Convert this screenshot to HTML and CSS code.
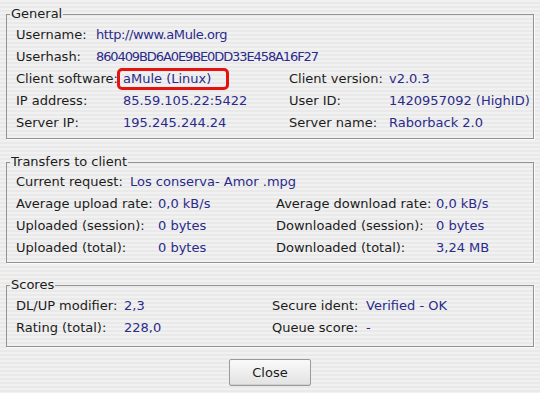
FILE: index.html
```html
<!DOCTYPE html>
<html lang="en">
<head>
  <meta charset="UTF-8" />
  <title>Client details</title>
  <link rel="stylesheet" href="styles.css">
</head>
<body>
  <fieldset class="group group-general">
    <legend>General</legend>
    <div class="rows">
      <div class="row">
        <span class="label w-80">Username:</span>
        <span class="value url">http://www.aMule.org</span>
      </div>
      <div class="row">
        <span class="label w-80">Userhash:</span>
        <span class="value hash">860409BD6A0E9BE0DD33E458A16F27</span>
      </div>
      <div class="row">
        <span class="label w-107">Client software:</span>
        <span class="value w-166"><span class="mark">aMule (Linux)</span></span>
        <span class="label w-100">Client version:</span>
        <span class="value">v2.0.3</span>
      </div>
      <div class="row">
        <span class="label w-107">IP address:</span>
        <span class="value w-166">85.59.105.22:5422</span>
        <span class="label w-100">User ID:</span>
        <span class="value">1420957092 (HighID)</span>
      </div>
      <div class="row">
        <span class="label w-107">Server IP:</span>
        <span class="value w-166">195.245.244.24</span>
        <span class="label w-100">Server name:</span>
        <span class="value">Raborback 2.0</span>
      </div>
    </div>
  </fieldset>

  <fieldset class="group group-transfers">
    <legend>Transfers to client</legend>
    <div class="rows">
      <div class="row">
        <span class="label w-114">Current request:</span>
        <span class="value">Los conserva- Amor .mpg</span>
      </div>
      <div class="row">
        <span class="label w-142">Average upload rate:</span>
        <span class="value w-118">0,0 kB/s</span>
        <span class="label w-160">Average download rate:</span>
        <span class="value">0,0 kB/s</span>
      </div>
      <div class="row">
        <span class="label w-142">Uploaded (session):</span>
        <span class="value w-118">0 bytes</span>
        <span class="label w-160">Downloaded (session):</span>
        <span class="value">0 bytes</span>
      </div>
      <div class="row">
        <span class="label w-142">Uploaded (total):</span>
        <span class="value w-118">0 bytes</span>
        <span class="label w-160">Downloaded (total):</span>
        <span class="value">3,24 MB</span>
      </div>
    </div>
  </fieldset>

  <fieldset class="group group-scores">
    <legend>Scores</legend>
    <div class="rows">
      <div class="row">
        <span class="label w-108">DL/UP modifier:</span>
        <span class="value w-148">2,3</span>
        <span class="label w-94">Secure ident:</span>
        <span class="value">Verified - OK</span>
      </div>
      <div class="row">
        <span class="label w-108">Rating (total):</span>
        <span class="value w-148">228,0</span>
        <span class="label w-94">Queue score:</span>
        <span class="value">-</span>
      </div>
    </div>
  </fieldset>

  <div class="actions">
    <button class="close">Close</button>
  </div>
</body>
</html>
```

FILE: styles.css
```css
html {
  background: repeating-linear-gradient(to bottom, #f1f1f1 0, #f1f1f1 2px, #e9e9e9 2px, #e9e9e9 4px);
}

body {
  margin: 0;
  padding: 6px 6px 0 6px;
  font-family: "DejaVu Sans", sans-serif;
  font-size: 13px;
  color: #1c1c1c;
  height: 393px;
  box-sizing: border-box;
  overflow: hidden;
}

.group {
  margin: 0;
  padding: 0;
  min-width: 0;
  border: 1px solid #939393;
  box-shadow: 1px 1px 0 #fbfbfb;
}

.group legend {
  margin-left: 3px;
  padding: 0 1px;
  line-height: 16px;
}

.rows {
  padding: 2px 9px 4px 9px;
}

.group-transfers {
  margin-top: 15px;
}

.group-transfers .rows {
  padding-top: 1px;
  padding-bottom: 3px;
}

.group-scores {
  margin-top: 14px;
}

.group-scores .rows {
  padding-bottom: 7px;
}

.row {
  display: flex;
  height: 22px;
  line-height: 22px;
  white-space: nowrap;
}

.label, .value {
  flex: none;
}

.value {
  color: #2b2b8a;
}

.url {
  letter-spacing: -0.4px;
}

.hash {
  letter-spacing: -1.1px;
}

.w-80 { width: 80px; }
.w-94 { width: 94px; }
.w-100 { width: 100px; }
.w-107 { width: 107px; }
.w-108 { width: 108px; }
.w-114 { width: 114px; }
.w-118 { width: 118px; }
.w-142 { width: 142px; }
.w-148 { width: 148px; }
.w-160 { width: 160px; }
.w-166 { width: 166px; }

.mark {
  display: inline-block;
  vertical-align: top;
  box-sizing: border-box;
  height: 22px;
  line-height: 16px;
  margin-left: -6px;
  padding: 0 15px 0 3px;
  border: 3px solid #e5130f;
  border-radius: 5px;
}

.actions {
  display: flex;
  justify-content: center;
  margin-top: 12px;
}

.close {
  width: 82px;
  height: 27px;
  font-family: "DejaVu Sans", sans-serif;
  font-size: 13px;
  color: #1c1c1c;
  background: linear-gradient(to bottom, #fafafa, #e2e2e2);
  border: 1px solid #9a9a9a;
  border-radius: 2px;
  box-shadow: inset 0 -1px 0 #d0d0d0;
  cursor: pointer;
}
```
